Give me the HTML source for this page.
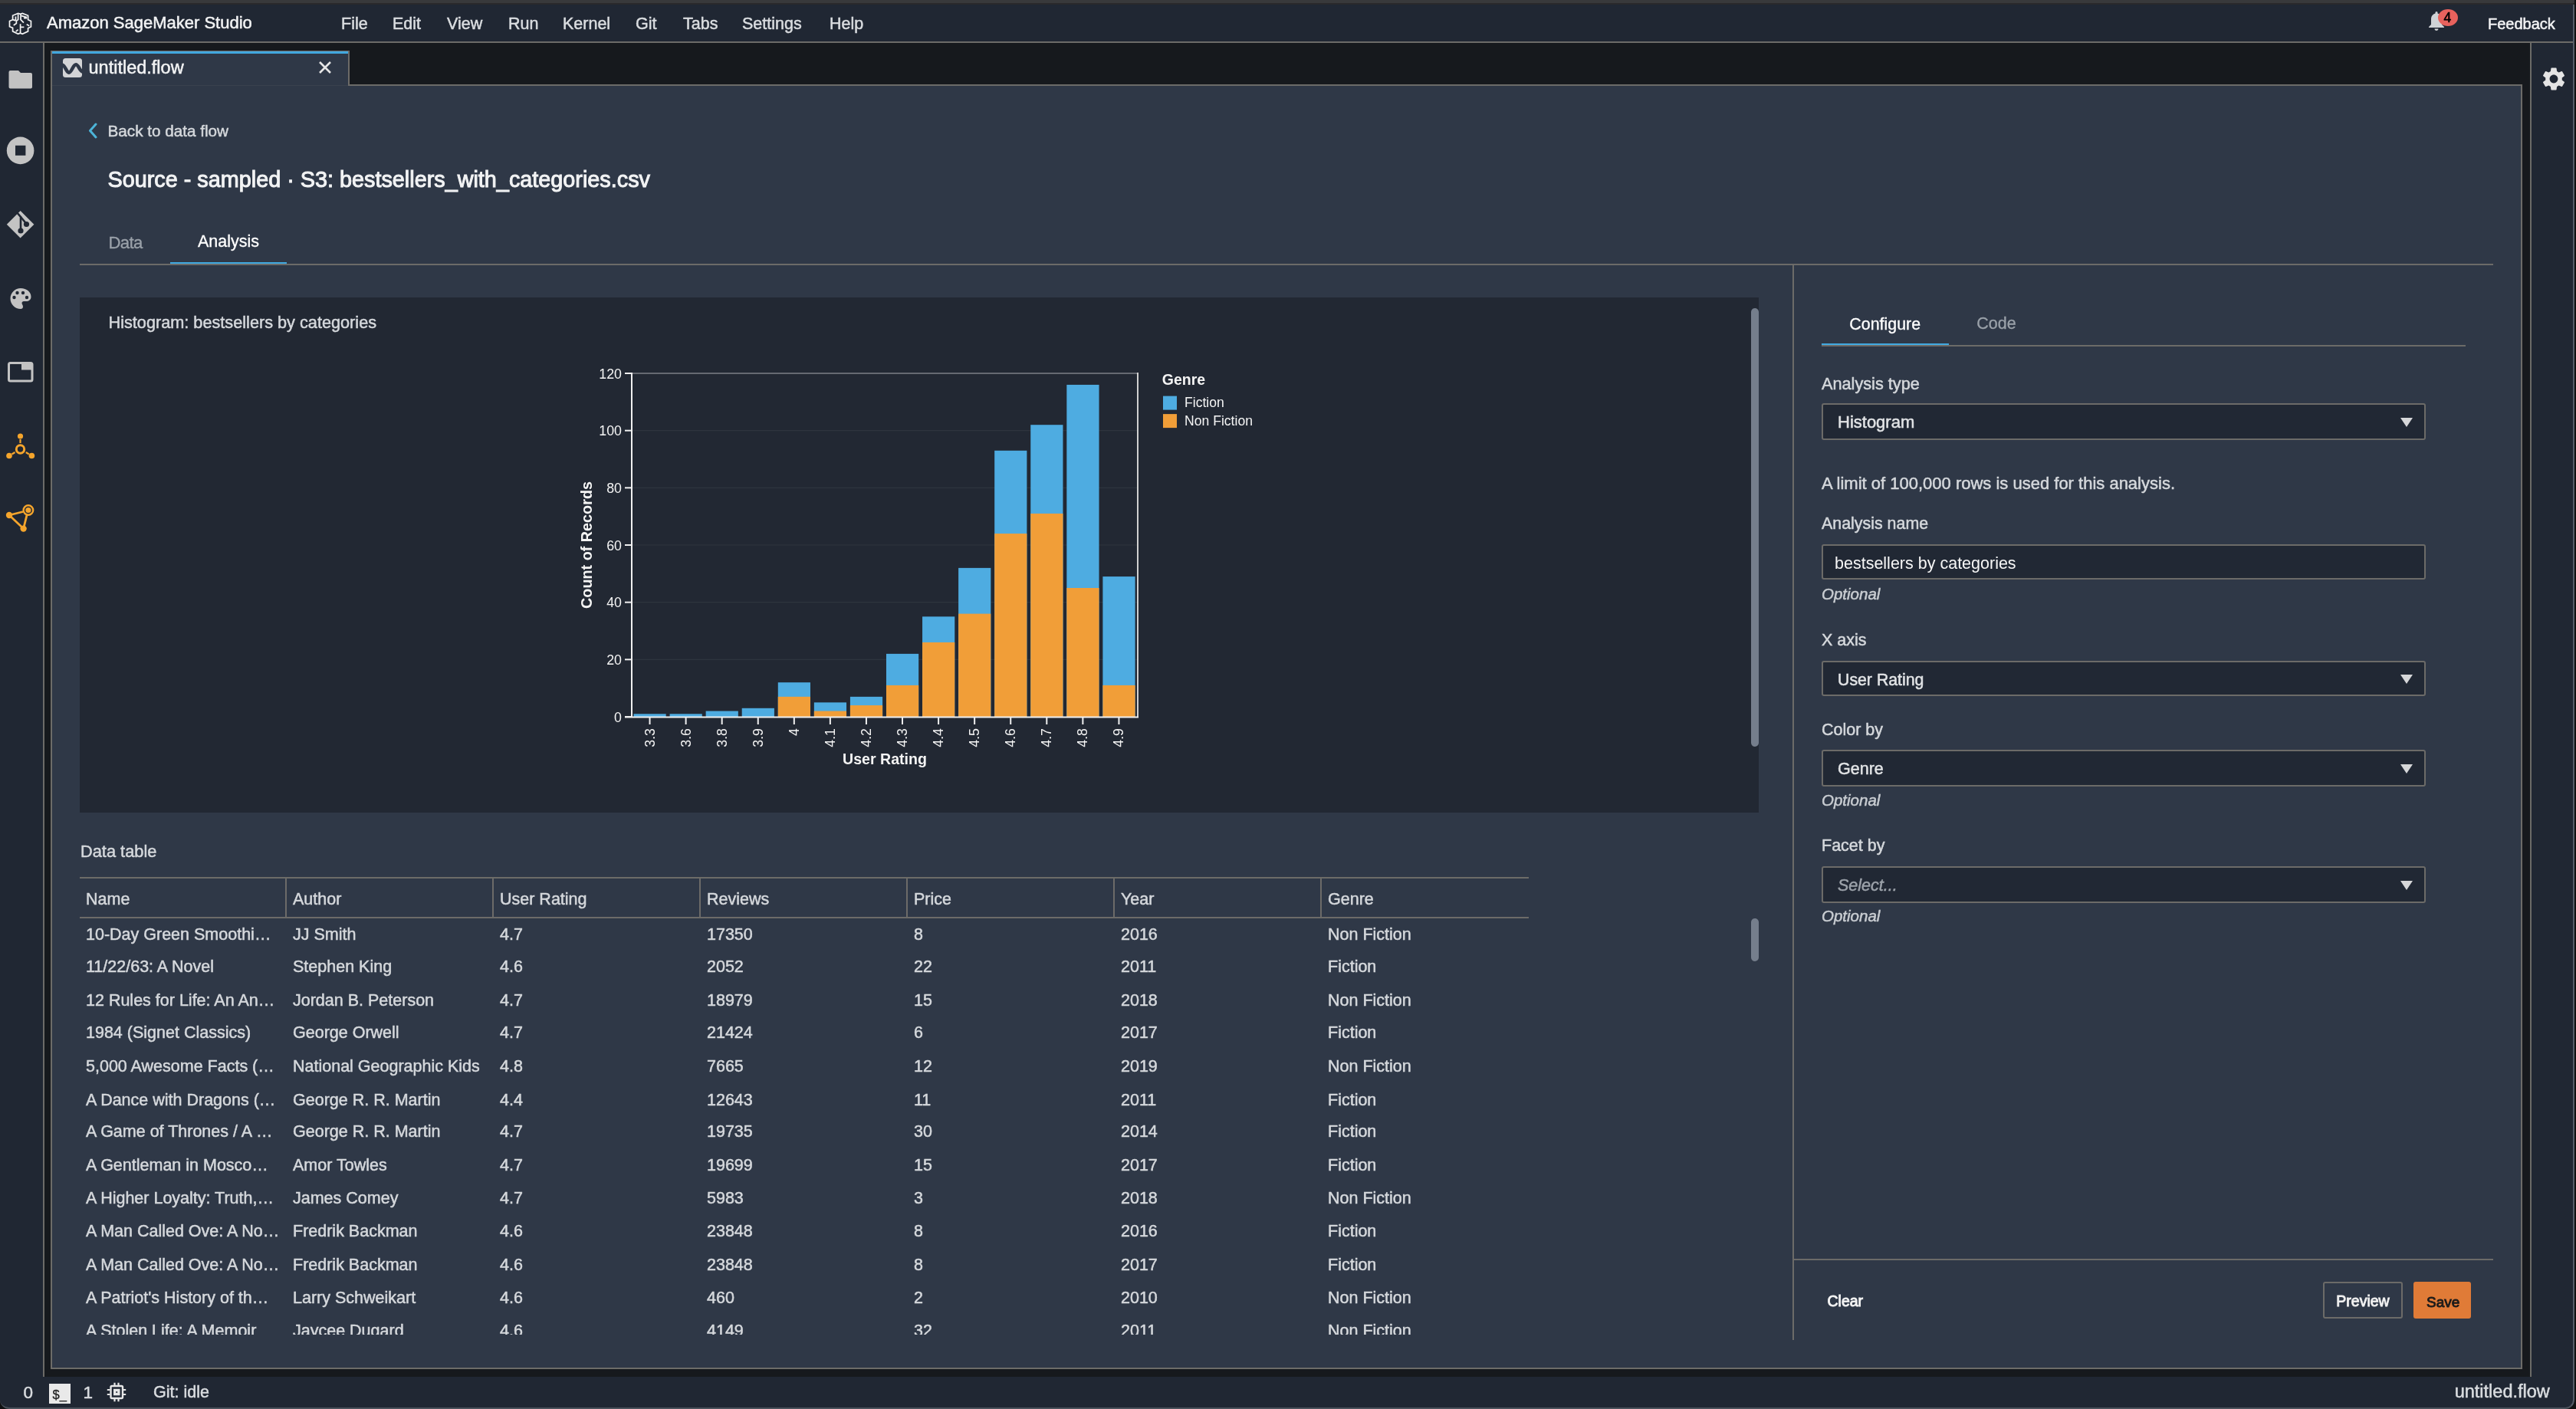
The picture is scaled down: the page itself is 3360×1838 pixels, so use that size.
<!DOCTYPE html><html><head><meta charset="utf-8"><style>html,body{margin:0;padding:0;width:3360px;height:1838px;overflow:hidden;font-family:"Liberation Sans", sans-serif;}</style></head><body><div style="position:absolute;left:0;top:0;width:3360px;height:1838px;overflow:hidden;will-change:transform;background:#0f1011"><div style="position:absolute;left:0px;top:0px;width:3360px;height:1838px;background:#0f1011;"></div>
<div style="position:absolute;left:0px;top:0px;width:3358px;height:4px;background:#38393b;"></div>
<div style="position:absolute;left:0px;top:4px;width:3358px;height:2px;background:#29292b;"></div>
<div style="position:absolute;left:0px;top:6px;width:3358px;height:48px;background:#202733;"></div>
<div style="position:absolute;left:0px;top:54px;width:3358px;height:2px;background:#6c6b68;"></div>
<div style="position:absolute;left:0px;top:56px;width:56px;height:1740px;background:#202733;"></div>
<div style="position:absolute;left:56px;top:56px;width:2px;height:1740px;background:#6c6b68;"></div>
<div style="position:absolute;left:58px;top:56px;width:3242px;height:1740px;background:#16191d;"></div>
<div style="position:absolute;left:3300px;top:56px;width:2px;height:1740px;background:#6c6b68;"></div>
<div style="position:absolute;left:3302px;top:56px;width:56px;height:1740px;background:#202733;"></div>
<div style="position:absolute;left:0px;top:1796px;width:3358px;height:42px;background:#202733;box-sizing:border-box;border-bottom:2px solid #4b525b;border-right:2px solid #555d68;border-radius:0 0 12px 12px;"></div>
<div style="position:absolute;left:3356px;top:6px;width:2px;height:1800px;background:#555d68;"></div>
<div style="position:absolute;left:66px;top:110px;width:3224px;height:1676px;background:#2f3847;box-sizing:border-box;border:2px solid #6c6b68;"></div>
<div style="position:absolute;left:66px;top:66px;width:390px;height:46px;background:#2f3847;box-sizing:border-box;border:2px solid #6c6b68;border-bottom:none;"></div>
<div style="position:absolute;left:68px;top:67px;width:386px;height:3px;background:#41a7de;"></div>
<div style="position:absolute;left:68px;top:110px;width:386px;height:2px;background:#2f3847;"></div>
<div style="position:absolute;left:68px;top:111px;width:386px;height:1px;background:#39414e;"></div>
<svg style="position:absolute;left:10px;top:15px" width="34" height="32" viewBox="0 0 1497 1409">
<g fill="none" stroke="#f4f4f4" stroke-width="76" stroke-linejoin="miter" stroke-linecap="butt">
<path d="M720,150 L850,110 L1170,230 L1170,470 L1340,550 L1340,880 L1170,960 L1170,1140 L850,1290 L720,1240 L600,1290 L290,1140 L290,940 L110,870 L110,550 L290,470 L290,230 L600,110 Z"/>
<path d="M750,150 L750,470 L920,640"/>
<path d="M790,250 L1070,330 L1070,380 L930,380"/>
<path d="M600,150 L600,470 L500,540 L500,680 L340,790"/>
<path d="M290,470 L460,520 M460,290 L460,520"/>
<path d="M730,720 L730,1240 M730,900 L940,900"/>
<path d="M1090,740 L1240,825"/>
<path d="M470,1150 L600,1040"/>
</g></svg>
<div style="position:absolute;left:61px;top:14.87px;height:29px;line-height:29px;font-size:22px;color:#f2f3f4;font-weight:400;font-style:normal;white-space:pre;-webkit-text-stroke:0.5px #f2f3f4;">Amazon SageMaker Studio</div>
<div style="position:absolute;left:445px;top:16.55px;height:28px;line-height:28px;font-size:21.5px;color:#dadde0;font-weight:400;font-style:normal;white-space:pre;-webkit-text-stroke:0.5px #dadde0;">File</div>
<div style="position:absolute;left:512px;top:16.55px;height:28px;line-height:28px;font-size:21.5px;color:#dadde0;font-weight:400;font-style:normal;white-space:pre;-webkit-text-stroke:0.5px #dadde0;">Edit</div>
<div style="position:absolute;left:583px;top:16.55px;height:28px;line-height:28px;font-size:21.5px;color:#dadde0;font-weight:400;font-style:normal;white-space:pre;-webkit-text-stroke:0.5px #dadde0;">View</div>
<div style="position:absolute;left:663px;top:16.55px;height:28px;line-height:28px;font-size:21.5px;color:#dadde0;font-weight:400;font-style:normal;white-space:pre;-webkit-text-stroke:0.5px #dadde0;">Run</div>
<div style="position:absolute;left:734px;top:16.55px;height:28px;line-height:28px;font-size:21.5px;color:#dadde0;font-weight:400;font-style:normal;white-space:pre;-webkit-text-stroke:0.5px #dadde0;">Kernel</div>
<div style="position:absolute;left:829px;top:16.55px;height:28px;line-height:28px;font-size:21.5px;color:#dadde0;font-weight:400;font-style:normal;white-space:pre;-webkit-text-stroke:0.5px #dadde0;">Git</div>
<div style="position:absolute;left:891px;top:16.55px;height:28px;line-height:28px;font-size:21.5px;color:#dadde0;font-weight:400;font-style:normal;white-space:pre;-webkit-text-stroke:0.5px #dadde0;">Tabs</div>
<div style="position:absolute;left:968px;top:16.55px;height:28px;line-height:28px;font-size:21.5px;color:#dadde0;font-weight:400;font-style:normal;white-space:pre;-webkit-text-stroke:0.5px #dadde0;">Settings</div>
<div style="position:absolute;left:1082px;top:16.55px;height:28px;line-height:28px;font-size:21.5px;color:#dadde0;font-weight:400;font-style:normal;white-space:pre;-webkit-text-stroke:0.5px #dadde0;">Help</div>
<div style="position:absolute;left:3245px;top:18.07px;height:26px;line-height:26px;font-size:20px;color:#f2f3f4;font-weight:400;font-style:normal;white-space:pre;-webkit-text-stroke:0.5px #f2f3f4;">Feedback</div>
<svg style="position:absolute;left:3166px;top:13px" width="24" height="28" viewBox="0 0 24 28">
<path d="M12,2 C13,2 13.5,2.8 13.5,3.5 L13.5,4.5 C17,5.5 19,8.5 19,12 L19,19 L22,22 L22,23 L2,23 L2,22 L5,19 L5,12 C5,8.5 7,5.5 10.5,4.5 L10.5,3.5 C10.5,2.8 11,2 12,2 Z M9.5,24.5 L14.5,24.5 C14.5,26 13.4,27 12,27 C10.6,27 9.5,26 9.5,24.5 Z" fill="#cfd2d6"/>
</svg>
<div style="position:absolute;left:3180px;top:12px;width:26px;height:22px;border-radius:50%;background:#e8625d;"></div>
<div style="position:absolute;left:3187.5px;top:12.23px;height:23px;line-height:23px;font-size:17.5px;color:#000;font-weight:400;font-style:normal;white-space:pre;-webkit-text-stroke:0.6px #000;">4</div>
<svg style="position:absolute;left:3312.5px;top:84.5px" width="36" height="36" viewBox="0 0 24 24">
<path fill="#e4e4e4" d="M19.14,12.94c0.04-0.3,0.06-0.61,0.06-0.94c0-0.32-0.02-0.64-0.07-0.94l2.03-1.58c0.18-0.14,0.23-0.41,0.12-0.61 l-1.92-3.32c-0.12-0.22-0.37-0.29-0.59-0.22l-2.39,0.96c-0.5-0.38-1.03-0.7-1.62-0.94L14.4,2.81c-0.04-0.24-0.24-0.41-0.48-0.41 h-3.84c-0.24,0-0.43,0.17-0.47,0.41L9.25,5.35C8.66,5.59,8.12,5.92,7.63,6.29L5.24,5.33c-0.22-0.08-0.47,0-0.59,0.22L2.74,8.87 C2.62,9.08,2.66,9.34,2.86,9.48l2.03,1.58C4.84,11.36,4.8,11.69,4.8,12s0.02,0.64,0.07,0.94l-2.03,1.58 c-0.18,0.14-0.23,0.41-0.12,0.61l1.92,3.32c0.12,0.22,0.37,0.29,0.59,0.22l2.39-0.96c0.5,0.38,1.03,0.7,1.62,0.94l0.36,2.54 c0.05,0.24,0.24,0.41,0.48,0.41h3.84c0.24,0,0.44-0.17,0.47-0.41l0.36-2.54c0.59-0.24,1.13-0.56,1.62-0.94l2.39,0.96 c0.22,0.08,0.47,0,0.59-0.22l1.92-3.32c0.12-0.22,0.07-0.47-0.12-0.61L19.14,12.94z M12,15.6c-1.98,0-3.6-1.62-3.6-3.6 s1.62-3.6,3.6-3.6s3.6,1.62,3.6,3.6S13.98,15.6,12,15.6z"/>
</svg>
<svg style="position:absolute;left:0;top:56px" width="56" height="700" viewBox="0 56 56 700">
<path fill="#c3c3c3" d="M13.5,92 L24,92 L27,95 L40,95 Q42,95 42,97 L42,113.5 Q42,115.5 40,115.5 L13.5,115.5 Q11.5,115.5 11.5,113.5 L11.5,94 Q11.5,92 13.5,92 Z"/>
<circle cx="26.6" cy="196.4" r="17.8" fill="#c3c3c3"/>
<rect x="20" y="189.8" width="13.4" height="13" fill="#202733"/>
<path fill="#c3c3c3" d="M26.6,275 L44.4,292.8 L26.6,310.6 L8.8,292.8 Z"/>
<g stroke="#202733" stroke-width="2.6" fill="none"><path d="M21.5,276.5 L27,283 L27,301"/><path d="M27,283 L34.5,292"/></g>
<circle cx="27" cy="301" r="3.6" fill="#202733"/><circle cx="34.5" cy="292.5" r="3.6" fill="#202733"/>
<path fill="#c3c3c3" d="M27,376 C35,376 40.5,381 40.5,387 C40.5,391 37.5,393 34,393 L31,393 C29.5,393 28.5,394 28.5,395.5 C28.5,397 30,398 30,400 C30,401.8 28.8,403 27,403 C19.5,403 13.5,397 13.5,389.5 C13.5,382 19.5,376 27,376 Z"/>
<g fill="#202733"><circle cx="18.5" cy="388" r="2.2"/><circle cx="22.5" cy="382" r="2.2"/><circle cx="30" cy="382" r="2.2"/><circle cx="35" cy="388" r="2.2"/></g>
<rect x="11.5" y="473.5" width="30.5" height="23.5" rx="2" fill="none" stroke="#c3c3c3" stroke-width="3"/>
<rect x="28" y="473.5" width="14" height="9" fill="#c3c3c3"/>
<g fill="#f5a52c"><circle cx="26.5" cy="569" r="3.6"/><circle cx="12" cy="594.5" r="3.8"/><circle cx="41.4" cy="594.5" r="3.8"/></g>
<circle cx="26.5" cy="586" r="5.2" fill="none" stroke="#f5a52c" stroke-width="3"/>
<g stroke="#f5a52c" stroke-width="2.2"><path d="M26.5,573 L26.5,578"/><path d="M15.5,592.5 L19.5,590"/><path d="M37.8,592.5 L33.8,590"/></g>
<circle cx="36.9" cy="665.5" r="6.3" fill="none" stroke="#f5a52c" stroke-width="2.4"/>
<circle cx="36.9" cy="665.5" r="3.6" fill="#f5a52c"/>
<circle cx="12" cy="672" r="4.2" fill="#f5a52c"/><circle cx="30.6" cy="689.6" r="4.2" fill="#f5a52c"/>
<g stroke="#f5a52c" stroke-width="2.8"><path d="M12,672 L30,667.5"/><path d="M12,672 L30.6,689.6"/><path d="M30.6,689.6 L35,672"/></g>
</svg>
<svg style="position:absolute;left:82px;top:76px" width="25" height="25" viewBox="0 0 25 25">
<rect x="0" y="0" width="25" height="25" rx="3.5" fill="#d3d4d6"/>
<path d="M-1,8.5 C3,9 4.5,18.6 7.9,18.6 C11.3,18.6 13.5,8.3 17,8.3 C20.5,8.3 22,17.5 26,17.5" fill="none" stroke="#2f3847" stroke-width="4.6"/>
</svg>
<div style="position:absolute;left:115.5px;top:73.35px;height:31px;line-height:31px;font-size:23.5px;color:#f2f3f4;font-weight:400;font-style:normal;white-space:pre;-webkit-text-stroke:0.5px #f2f3f4;">untitled.flow</div>
<svg style="position:absolute;left:416px;top:80px" width="16" height="16" viewBox="0 0 16 16">
<path d="M1,1 L15,15 M15,1 L1,15" stroke="#e6e6e6" stroke-width="2.6"/></svg>
<svg style="position:absolute;left:113px;top:160px" width="16" height="21" viewBox="0 0 16 21">
<path d="M12,2 L4.5,10.5 L12,19" fill="none" stroke="#4cb4d8" stroke-width="3" stroke-linecap="round" stroke-linejoin="round"/></svg>
<div style="position:absolute;left:140.5px;top:156.52px;height:27px;line-height:27px;font-size:20.7px;color:#d5d8dc;font-weight:400;font-style:normal;white-space:pre;-webkit-text-stroke:0.5px #d5d8dc;">Back to data flow</div>
<div style="position:absolute;left:140.5px;top:215.52px;height:37px;line-height:37px;font-size:28.8px;color:#f2f3f4;font-weight:400;font-style:normal;white-space:pre;-webkit-text-stroke:1.0px #f2f3f4;">Source - sampled · S3: bestsellers_with_categories.csv</div>
<div style="position:absolute;left:141.5px;top:301.80px;height:29px;line-height:29px;font-size:22.2px;color:#9aa1a9;font-weight:400;font-style:normal;white-space:pre;-webkit-text-stroke:0.3px #9aa1a9;letter-spacing:-0.7px;">Data</div>
<div style="position:absolute;left:258px;top:300.85px;height:28px;line-height:28px;font-size:21.5px;color:#ffffff;font-weight:400;font-style:normal;white-space:pre;-webkit-text-stroke:0.3px #ffffff;">Analysis</div>
<div style="position:absolute;left:104px;top:344px;width:3148px;height:2px;background:#6c6b68;"></div>
<div style="position:absolute;left:222px;top:342px;width:152px;height:2px;background:#41a9e1;"></div>
<div style="position:absolute;left:104px;top:388px;width:2190px;height:672px;background:#222833;"></div>
<div style="position:absolute;left:2284px;top:402px;width:10px;height:572px;background:#757e8c;border-radius:5px;"></div>
<div style="position:absolute;left:141.5px;top:406.98px;height:28px;line-height:28px;font-size:21.7px;color:#d5d8dc;font-weight:400;font-style:normal;white-space:pre;-webkit-text-stroke:0.5px #d5d8dc;">Histogram: bestsellers by categories</div>
<svg style="position:absolute;left:0;top:0" width="3360" height="1838" viewBox="0 0 3360 1838" font-family="Liberation Sans, sans-serif" style="-webkit-text-stroke:0.4px #f4f4f4"><line x1="824" y1="860.33" x2="1483" y2="860.33" stroke="#2e343e" stroke-width="1.2"/><line x1="824" y1="785.67" x2="1483" y2="785.67" stroke="#2e343e" stroke-width="1.2"/><line x1="824" y1="711.00" x2="1483" y2="711.00" stroke="#2e343e" stroke-width="1.2"/><line x1="824" y1="636.33" x2="1483" y2="636.33" stroke="#2e343e" stroke-width="1.2"/><line x1="824" y1="561.67" x2="1483" y2="561.67" stroke="#2e343e" stroke-width="1.2"/><line x1="824" y1="487" x2="1483" y2="487" stroke="#7c8088" stroke-width="1.5"/><line x1="1484" y1="486" x2="1484" y2="936" stroke="#d0d0d0" stroke-width="2"/><rect x="826.50" y="931.27" width="42.2" height="3.73" fill="#4eace1"/><rect x="873.57" y="931.27" width="42.2" height="3.73" fill="#4eace1"/><rect x="920.64" y="927.53" width="42.2" height="7.47" fill="#4eace1"/><rect x="967.71" y="923.80" width="42.2" height="11.20" fill="#4eace1"/><rect x="1014.78" y="890.20" width="42.2" height="44.80" fill="#4eace1"/><rect x="1014.78" y="908.87" width="42.2" height="26.13" fill="#f19e38"/><rect x="1061.85" y="916.33" width="42.2" height="18.67" fill="#4eace1"/><rect x="1061.85" y="927.53" width="42.2" height="7.47" fill="#f19e38"/><rect x="1108.92" y="908.87" width="42.2" height="26.13" fill="#4eace1"/><rect x="1108.92" y="920.07" width="42.2" height="14.93" fill="#f19e38"/><rect x="1155.99" y="852.87" width="42.2" height="82.13" fill="#4eace1"/><rect x="1155.99" y="893.93" width="42.2" height="41.07" fill="#f19e38"/><rect x="1203.06" y="804.33" width="42.2" height="130.67" fill="#4eace1"/><rect x="1203.06" y="837.93" width="42.2" height="97.07" fill="#f19e38"/><rect x="1250.13" y="740.87" width="42.2" height="194.13" fill="#4eace1"/><rect x="1250.13" y="800.60" width="42.2" height="134.40" fill="#f19e38"/><rect x="1297.20" y="587.80" width="42.2" height="347.20" fill="#4eace1"/><rect x="1297.20" y="696.07" width="42.2" height="238.93" fill="#f19e38"/><rect x="1344.27" y="554.20" width="42.2" height="380.80" fill="#4eace1"/><rect x="1344.27" y="669.93" width="42.2" height="265.07" fill="#f19e38"/><rect x="1391.34" y="501.93" width="42.2" height="433.07" fill="#4eace1"/><rect x="1391.34" y="767.00" width="42.2" height="168.00" fill="#f19e38"/><rect x="1438.41" y="752.07" width="42.2" height="182.93" fill="#4eace1"/><rect x="1438.41" y="893.93" width="42.2" height="41.07" fill="#f19e38"/><line x1="824" y1="486" x2="824" y2="936" stroke="#f0f0f0" stroke-width="2"/><line x1="815" y1="935.5" x2="1485" y2="935.5" stroke="#f0f0f0" stroke-width="2"/><line x1="815" y1="935.00" x2="824" y2="935.00" stroke="#f0f0f0" stroke-width="2"/><text x="811" y="941.50" text-anchor="end" font-size="17.8" fill="#f4f4f4">0</text><line x1="815" y1="860.33" x2="824" y2="860.33" stroke="#f0f0f0" stroke-width="2"/><text x="811" y="866.83" text-anchor="end" font-size="17.8" fill="#f4f4f4">20</text><line x1="815" y1="785.67" x2="824" y2="785.67" stroke="#f0f0f0" stroke-width="2"/><text x="811" y="792.17" text-anchor="end" font-size="17.8" fill="#f4f4f4">40</text><line x1="815" y1="711.00" x2="824" y2="711.00" stroke="#f0f0f0" stroke-width="2"/><text x="811" y="717.50" text-anchor="end" font-size="17.8" fill="#f4f4f4">60</text><line x1="815" y1="636.33" x2="824" y2="636.33" stroke="#f0f0f0" stroke-width="2"/><text x="811" y="642.83" text-anchor="end" font-size="17.8" fill="#f4f4f4">80</text><line x1="815" y1="561.67" x2="824" y2="561.67" stroke="#f0f0f0" stroke-width="2"/><text x="811" y="568.17" text-anchor="end" font-size="17.8" fill="#f4f4f4">100</text><line x1="815" y1="487.00" x2="824" y2="487.00" stroke="#f0f0f0" stroke-width="2"/><text x="811" y="493.50" text-anchor="end" font-size="17.8" fill="#f4f4f4">120</text><line x1="847.53" y1="936" x2="847.53" y2="945" stroke="#f0f0f0" stroke-width="2"/><text transform="translate(853.53,950) rotate(-90)" text-anchor="end" font-size="17.8" fill="#f4f4f4">3.3</text><line x1="894.61" y1="936" x2="894.61" y2="945" stroke="#f0f0f0" stroke-width="2"/><text transform="translate(900.61,950) rotate(-90)" text-anchor="end" font-size="17.8" fill="#f4f4f4">3.6</text><line x1="941.67" y1="936" x2="941.67" y2="945" stroke="#f0f0f0" stroke-width="2"/><text transform="translate(947.67,950) rotate(-90)" text-anchor="end" font-size="17.8" fill="#f4f4f4">3.8</text><line x1="988.75" y1="936" x2="988.75" y2="945" stroke="#f0f0f0" stroke-width="2"/><text transform="translate(994.75,950) rotate(-90)" text-anchor="end" font-size="17.8" fill="#f4f4f4">3.9</text><line x1="1035.82" y1="936" x2="1035.82" y2="945" stroke="#f0f0f0" stroke-width="2"/><text transform="translate(1041.82,950) rotate(-90)" text-anchor="end" font-size="17.8" fill="#f4f4f4">4</text><line x1="1082.88" y1="936" x2="1082.88" y2="945" stroke="#f0f0f0" stroke-width="2"/><text transform="translate(1088.88,950) rotate(-90)" text-anchor="end" font-size="17.8" fill="#f4f4f4">4.1</text><line x1="1129.95" y1="936" x2="1129.95" y2="945" stroke="#f0f0f0" stroke-width="2"/><text transform="translate(1135.95,950) rotate(-90)" text-anchor="end" font-size="17.8" fill="#f4f4f4">4.2</text><line x1="1177.03" y1="936" x2="1177.03" y2="945" stroke="#f0f0f0" stroke-width="2"/><text transform="translate(1183.03,950) rotate(-90)" text-anchor="end" font-size="17.8" fill="#f4f4f4">4.3</text><line x1="1224.10" y1="936" x2="1224.10" y2="945" stroke="#f0f0f0" stroke-width="2"/><text transform="translate(1230.10,950) rotate(-90)" text-anchor="end" font-size="17.8" fill="#f4f4f4">4.4</text><line x1="1271.16" y1="936" x2="1271.16" y2="945" stroke="#f0f0f0" stroke-width="2"/><text transform="translate(1277.16,950) rotate(-90)" text-anchor="end" font-size="17.8" fill="#f4f4f4">4.5</text><line x1="1318.24" y1="936" x2="1318.24" y2="945" stroke="#f0f0f0" stroke-width="2"/><text transform="translate(1324.24,950) rotate(-90)" text-anchor="end" font-size="17.8" fill="#f4f4f4">4.6</text><line x1="1365.30" y1="936" x2="1365.30" y2="945" stroke="#f0f0f0" stroke-width="2"/><text transform="translate(1371.30,950) rotate(-90)" text-anchor="end" font-size="17.8" fill="#f4f4f4">4.7</text><line x1="1412.38" y1="936" x2="1412.38" y2="945" stroke="#f0f0f0" stroke-width="2"/><text transform="translate(1418.38,950) rotate(-90)" text-anchor="end" font-size="17.8" fill="#f4f4f4">4.8</text><line x1="1459.45" y1="936" x2="1459.45" y2="945" stroke="#f0f0f0" stroke-width="2"/><text transform="translate(1465.45,950) rotate(-90)" text-anchor="end" font-size="17.8" fill="#f4f4f4">4.9</text><text transform="translate(772,711) rotate(-90)" text-anchor="middle" font-size="19.8" font-weight="bold" fill="#f4f4f4">Count of Records</text><text x="1154" y="996.7" text-anchor="middle" font-size="19.6" font-weight="bold" fill="#f4f4f4">User Rating</text><text x="1515.8" y="501.8" font-size="19.5" font-weight="bold" fill="#f4f4f4">Genre</text><rect x="1517" y="516.6" width="18" height="18" fill="#4eace1"/><rect x="1517" y="540.1" width="18" height="18" fill="#f19e38"/><text x="1545" y="531" font-size="17.6" fill="#f4f4f4">Fiction</text><text x="1545" y="554.5" font-size="17.6" fill="#f4f4f4">Non Fiction</text></svg>
<div style="position:absolute;left:105px;top:1096.84px;height:28px;line-height:28px;font-size:21.8px;color:#d5d8dc;font-weight:400;font-style:normal;white-space:pre;-webkit-text-stroke:0.5px #d5d8dc;">Data table</div>
<div style="position:absolute;left:104px;top:1144px;width:1890px;height:2px;background:#6c6b68;"></div>
<div style="position:absolute;left:104px;top:1196px;width:1890px;height:2px;background:#6c6b68;"></div>
<div style="position:absolute;left:372px;top:1146px;width:2px;height:50px;background:#6c6b68;"></div>
<div style="position:absolute;left:642px;top:1146px;width:2px;height:50px;background:#6c6b68;"></div>
<div style="position:absolute;left:912px;top:1146px;width:2px;height:50px;background:#6c6b68;"></div>
<div style="position:absolute;left:1182px;top:1146px;width:2px;height:50px;background:#6c6b68;"></div>
<div style="position:absolute;left:1452px;top:1146px;width:2px;height:50px;background:#6c6b68;"></div>
<div style="position:absolute;left:1722px;top:1146px;width:2px;height:50px;background:#6c6b68;"></div>
<div style="position:absolute;left:112px;top:1159.15px;height:28px;line-height:28px;font-size:21.5px;color:#d5d8dc;font-weight:400;font-style:normal;white-space:pre;-webkit-text-stroke:0.5px #d5d8dc;">Name</div>
<div style="position:absolute;left:382px;top:1159.15px;height:28px;line-height:28px;font-size:21.5px;color:#d5d8dc;font-weight:400;font-style:normal;white-space:pre;-webkit-text-stroke:0.5px #d5d8dc;">Author</div>
<div style="position:absolute;left:652px;top:1159.15px;height:28px;line-height:28px;font-size:21.5px;color:#d5d8dc;font-weight:400;font-style:normal;white-space:pre;-webkit-text-stroke:0.5px #d5d8dc;">User Rating</div>
<div style="position:absolute;left:922px;top:1159.15px;height:28px;line-height:28px;font-size:21.5px;color:#d5d8dc;font-weight:400;font-style:normal;white-space:pre;-webkit-text-stroke:0.5px #d5d8dc;">Reviews</div>
<div style="position:absolute;left:1192px;top:1159.15px;height:28px;line-height:28px;font-size:21.5px;color:#d5d8dc;font-weight:400;font-style:normal;white-space:pre;-webkit-text-stroke:0.5px #d5d8dc;">Price</div>
<div style="position:absolute;left:1462px;top:1159.15px;height:28px;line-height:28px;font-size:21.5px;color:#d5d8dc;font-weight:400;font-style:normal;white-space:pre;-webkit-text-stroke:0.5px #d5d8dc;">Year</div>
<div style="position:absolute;left:1732px;top:1159.15px;height:28px;line-height:28px;font-size:21.5px;color:#d5d8dc;font-weight:400;font-style:normal;white-space:pre;-webkit-text-stroke:0.5px #d5d8dc;">Genre</div>
<div style="position:absolute;left:104px;top:1198px;width:1890px;height:543px;overflow:hidden;"><div style="position:absolute;left:8px;top:7.25px;height:28px;line-height:28px;font-size:21.5px;color:#d5d8dc;white-space:pre;-webkit-text-stroke:0.5px #d5d8dc;">10-Day Green Smoothi…</div><div style="position:absolute;left:278px;top:7.25px;height:28px;line-height:28px;font-size:21.5px;color:#d5d8dc;white-space:pre;-webkit-text-stroke:0.5px #d5d8dc;">JJ Smith</div><div style="position:absolute;left:548px;top:7.25px;height:28px;line-height:28px;font-size:21.5px;color:#d5d8dc;white-space:pre;-webkit-text-stroke:0.5px #d5d8dc;">4.7</div><div style="position:absolute;left:818px;top:7.25px;height:28px;line-height:28px;font-size:21.5px;color:#d5d8dc;white-space:pre;-webkit-text-stroke:0.5px #d5d8dc;">17350</div><div style="position:absolute;left:1088px;top:7.25px;height:28px;line-height:28px;font-size:21.5px;color:#d5d8dc;white-space:pre;-webkit-text-stroke:0.5px #d5d8dc;">8</div><div style="position:absolute;left:1358px;top:7.25px;height:28px;line-height:28px;font-size:21.5px;color:#d5d8dc;white-space:pre;-webkit-text-stroke:0.5px #d5d8dc;">2016</div><div style="position:absolute;left:1628px;top:7.25px;height:28px;line-height:28px;font-size:21.5px;color:#d5d8dc;white-space:pre;-webkit-text-stroke:0.5px #d5d8dc;">Non Fiction</div><div style="position:absolute;left:8px;top:49.25px;height:28px;line-height:28px;font-size:21.5px;color:#d5d8dc;white-space:pre;-webkit-text-stroke:0.5px #d5d8dc;">11/22/63: A Novel</div><div style="position:absolute;left:278px;top:49.25px;height:28px;line-height:28px;font-size:21.5px;color:#d5d8dc;white-space:pre;-webkit-text-stroke:0.5px #d5d8dc;">Stephen King</div><div style="position:absolute;left:548px;top:49.25px;height:28px;line-height:28px;font-size:21.5px;color:#d5d8dc;white-space:pre;-webkit-text-stroke:0.5px #d5d8dc;">4.6</div><div style="position:absolute;left:818px;top:49.25px;height:28px;line-height:28px;font-size:21.5px;color:#d5d8dc;white-space:pre;-webkit-text-stroke:0.5px #d5d8dc;">2052</div><div style="position:absolute;left:1088px;top:49.25px;height:28px;line-height:28px;font-size:21.5px;color:#d5d8dc;white-space:pre;-webkit-text-stroke:0.5px #d5d8dc;">22</div><div style="position:absolute;left:1358px;top:49.25px;height:28px;line-height:28px;font-size:21.5px;color:#d5d8dc;white-space:pre;-webkit-text-stroke:0.5px #d5d8dc;">2011</div><div style="position:absolute;left:1628px;top:49.25px;height:28px;line-height:28px;font-size:21.5px;color:#d5d8dc;white-space:pre;-webkit-text-stroke:0.5px #d5d8dc;">Fiction</div><div style="position:absolute;left:8px;top:92.85px;height:28px;line-height:28px;font-size:21.5px;color:#d5d8dc;white-space:pre;-webkit-text-stroke:0.5px #d5d8dc;">12 Rules for Life: An An…</div><div style="position:absolute;left:278px;top:92.85px;height:28px;line-height:28px;font-size:21.5px;color:#d5d8dc;white-space:pre;-webkit-text-stroke:0.5px #d5d8dc;">Jordan B. Peterson</div><div style="position:absolute;left:548px;top:92.85px;height:28px;line-height:28px;font-size:21.5px;color:#d5d8dc;white-space:pre;-webkit-text-stroke:0.5px #d5d8dc;">4.7</div><div style="position:absolute;left:818px;top:92.85px;height:28px;line-height:28px;font-size:21.5px;color:#d5d8dc;white-space:pre;-webkit-text-stroke:0.5px #d5d8dc;">18979</div><div style="position:absolute;left:1088px;top:92.85px;height:28px;line-height:28px;font-size:21.5px;color:#d5d8dc;white-space:pre;-webkit-text-stroke:0.5px #d5d8dc;">15</div><div style="position:absolute;left:1358px;top:92.85px;height:28px;line-height:28px;font-size:21.5px;color:#d5d8dc;white-space:pre;-webkit-text-stroke:0.5px #d5d8dc;">2018</div><div style="position:absolute;left:1628px;top:92.85px;height:28px;line-height:28px;font-size:21.5px;color:#d5d8dc;white-space:pre;-webkit-text-stroke:0.5px #d5d8dc;">Non Fiction</div><div style="position:absolute;left:8px;top:134.85px;height:28px;line-height:28px;font-size:21.5px;color:#d5d8dc;white-space:pre;-webkit-text-stroke:0.5px #d5d8dc;">1984 (Signet Classics)</div><div style="position:absolute;left:278px;top:134.85px;height:28px;line-height:28px;font-size:21.5px;color:#d5d8dc;white-space:pre;-webkit-text-stroke:0.5px #d5d8dc;">George Orwell</div><div style="position:absolute;left:548px;top:134.85px;height:28px;line-height:28px;font-size:21.5px;color:#d5d8dc;white-space:pre;-webkit-text-stroke:0.5px #d5d8dc;">4.7</div><div style="position:absolute;left:818px;top:134.85px;height:28px;line-height:28px;font-size:21.5px;color:#d5d8dc;white-space:pre;-webkit-text-stroke:0.5px #d5d8dc;">21424</div><div style="position:absolute;left:1088px;top:134.85px;height:28px;line-height:28px;font-size:21.5px;color:#d5d8dc;white-space:pre;-webkit-text-stroke:0.5px #d5d8dc;">6</div><div style="position:absolute;left:1358px;top:134.85px;height:28px;line-height:28px;font-size:21.5px;color:#d5d8dc;white-space:pre;-webkit-text-stroke:0.5px #d5d8dc;">2017</div><div style="position:absolute;left:1628px;top:134.85px;height:28px;line-height:28px;font-size:21.5px;color:#d5d8dc;white-space:pre;-webkit-text-stroke:0.5px #d5d8dc;">Fiction</div><div style="position:absolute;left:8px;top:178.85px;height:28px;line-height:28px;font-size:21.5px;color:#d5d8dc;white-space:pre;-webkit-text-stroke:0.5px #d5d8dc;">5,000 Awesome Facts (…</div><div style="position:absolute;left:278px;top:178.85px;height:28px;line-height:28px;font-size:21.5px;color:#d5d8dc;white-space:pre;-webkit-text-stroke:0.5px #d5d8dc;">National Geographic Kids</div><div style="position:absolute;left:548px;top:178.85px;height:28px;line-height:28px;font-size:21.5px;color:#d5d8dc;white-space:pre;-webkit-text-stroke:0.5px #d5d8dc;">4.8</div><div style="position:absolute;left:818px;top:178.85px;height:28px;line-height:28px;font-size:21.5px;color:#d5d8dc;white-space:pre;-webkit-text-stroke:0.5px #d5d8dc;">7665</div><div style="position:absolute;left:1088px;top:178.85px;height:28px;line-height:28px;font-size:21.5px;color:#d5d8dc;white-space:pre;-webkit-text-stroke:0.5px #d5d8dc;">12</div><div style="position:absolute;left:1358px;top:178.85px;height:28px;line-height:28px;font-size:21.5px;color:#d5d8dc;white-space:pre;-webkit-text-stroke:0.5px #d5d8dc;">2019</div><div style="position:absolute;left:1628px;top:178.85px;height:28px;line-height:28px;font-size:21.5px;color:#d5d8dc;white-space:pre;-webkit-text-stroke:0.5px #d5d8dc;">Non Fiction</div><div style="position:absolute;left:8px;top:222.55px;height:28px;line-height:28px;font-size:21.5px;color:#d5d8dc;white-space:pre;-webkit-text-stroke:0.5px #d5d8dc;">A Dance with Dragons (…</div><div style="position:absolute;left:278px;top:222.55px;height:28px;line-height:28px;font-size:21.5px;color:#d5d8dc;white-space:pre;-webkit-text-stroke:0.5px #d5d8dc;">George R. R. Martin</div><div style="position:absolute;left:548px;top:222.55px;height:28px;line-height:28px;font-size:21.5px;color:#d5d8dc;white-space:pre;-webkit-text-stroke:0.5px #d5d8dc;">4.4</div><div style="position:absolute;left:818px;top:222.55px;height:28px;line-height:28px;font-size:21.5px;color:#d5d8dc;white-space:pre;-webkit-text-stroke:0.5px #d5d8dc;">12643</div><div style="position:absolute;left:1088px;top:222.55px;height:28px;line-height:28px;font-size:21.5px;color:#d5d8dc;white-space:pre;-webkit-text-stroke:0.5px #d5d8dc;">11</div><div style="position:absolute;left:1358px;top:222.55px;height:28px;line-height:28px;font-size:21.5px;color:#d5d8dc;white-space:pre;-webkit-text-stroke:0.5px #d5d8dc;">2011</div><div style="position:absolute;left:1628px;top:222.55px;height:28px;line-height:28px;font-size:21.5px;color:#d5d8dc;white-space:pre;-webkit-text-stroke:0.5px #d5d8dc;">Fiction</div><div style="position:absolute;left:8px;top:264.35px;height:28px;line-height:28px;font-size:21.5px;color:#d5d8dc;white-space:pre;-webkit-text-stroke:0.5px #d5d8dc;">A Game of Thrones / A …</div><div style="position:absolute;left:278px;top:264.35px;height:28px;line-height:28px;font-size:21.5px;color:#d5d8dc;white-space:pre;-webkit-text-stroke:0.5px #d5d8dc;">George R. R. Martin</div><div style="position:absolute;left:548px;top:264.35px;height:28px;line-height:28px;font-size:21.5px;color:#d5d8dc;white-space:pre;-webkit-text-stroke:0.5px #d5d8dc;">4.7</div><div style="position:absolute;left:818px;top:264.35px;height:28px;line-height:28px;font-size:21.5px;color:#d5d8dc;white-space:pre;-webkit-text-stroke:0.5px #d5d8dc;">19735</div><div style="position:absolute;left:1088px;top:264.35px;height:28px;line-height:28px;font-size:21.5px;color:#d5d8dc;white-space:pre;-webkit-text-stroke:0.5px #d5d8dc;">30</div><div style="position:absolute;left:1358px;top:264.35px;height:28px;line-height:28px;font-size:21.5px;color:#d5d8dc;white-space:pre;-webkit-text-stroke:0.5px #d5d8dc;">2014</div><div style="position:absolute;left:1628px;top:264.35px;height:28px;line-height:28px;font-size:21.5px;color:#d5d8dc;white-space:pre;-webkit-text-stroke:0.5px #d5d8dc;">Fiction</div><div style="position:absolute;left:8px;top:308.35px;height:28px;line-height:28px;font-size:21.5px;color:#d5d8dc;white-space:pre;-webkit-text-stroke:0.5px #d5d8dc;">A Gentleman in Mosco…</div><div style="position:absolute;left:278px;top:308.35px;height:28px;line-height:28px;font-size:21.5px;color:#d5d8dc;white-space:pre;-webkit-text-stroke:0.5px #d5d8dc;">Amor Towles</div><div style="position:absolute;left:548px;top:308.35px;height:28px;line-height:28px;font-size:21.5px;color:#d5d8dc;white-space:pre;-webkit-text-stroke:0.5px #d5d8dc;">4.7</div><div style="position:absolute;left:818px;top:308.35px;height:28px;line-height:28px;font-size:21.5px;color:#d5d8dc;white-space:pre;-webkit-text-stroke:0.5px #d5d8dc;">19699</div><div style="position:absolute;left:1088px;top:308.35px;height:28px;line-height:28px;font-size:21.5px;color:#d5d8dc;white-space:pre;-webkit-text-stroke:0.5px #d5d8dc;">15</div><div style="position:absolute;left:1358px;top:308.35px;height:28px;line-height:28px;font-size:21.5px;color:#d5d8dc;white-space:pre;-webkit-text-stroke:0.5px #d5d8dc;">2017</div><div style="position:absolute;left:1628px;top:308.35px;height:28px;line-height:28px;font-size:21.5px;color:#d5d8dc;white-space:pre;-webkit-text-stroke:0.5px #d5d8dc;">Fiction</div><div style="position:absolute;left:8px;top:350.55px;height:28px;line-height:28px;font-size:21.5px;color:#d5d8dc;white-space:pre;-webkit-text-stroke:0.5px #d5d8dc;">A Higher Loyalty: Truth,…</div><div style="position:absolute;left:278px;top:350.55px;height:28px;line-height:28px;font-size:21.5px;color:#d5d8dc;white-space:pre;-webkit-text-stroke:0.5px #d5d8dc;">James Comey</div><div style="position:absolute;left:548px;top:350.55px;height:28px;line-height:28px;font-size:21.5px;color:#d5d8dc;white-space:pre;-webkit-text-stroke:0.5px #d5d8dc;">4.7</div><div style="position:absolute;left:818px;top:350.55px;height:28px;line-height:28px;font-size:21.5px;color:#d5d8dc;white-space:pre;-webkit-text-stroke:0.5px #d5d8dc;">5983</div><div style="position:absolute;left:1088px;top:350.55px;height:28px;line-height:28px;font-size:21.5px;color:#d5d8dc;white-space:pre;-webkit-text-stroke:0.5px #d5d8dc;">3</div><div style="position:absolute;left:1358px;top:350.55px;height:28px;line-height:28px;font-size:21.5px;color:#d5d8dc;white-space:pre;-webkit-text-stroke:0.5px #d5d8dc;">2018</div><div style="position:absolute;left:1628px;top:350.55px;height:28px;line-height:28px;font-size:21.5px;color:#d5d8dc;white-space:pre;-webkit-text-stroke:0.5px #d5d8dc;">Non Fiction</div><div style="position:absolute;left:8px;top:393.85px;height:28px;line-height:28px;font-size:21.5px;color:#d5d8dc;white-space:pre;-webkit-text-stroke:0.5px #d5d8dc;">A Man Called Ove: A No…</div><div style="position:absolute;left:278px;top:393.85px;height:28px;line-height:28px;font-size:21.5px;color:#d5d8dc;white-space:pre;-webkit-text-stroke:0.5px #d5d8dc;">Fredrik Backman</div><div style="position:absolute;left:548px;top:393.85px;height:28px;line-height:28px;font-size:21.5px;color:#d5d8dc;white-space:pre;-webkit-text-stroke:0.5px #d5d8dc;">4.6</div><div style="position:absolute;left:818px;top:393.85px;height:28px;line-height:28px;font-size:21.5px;color:#d5d8dc;white-space:pre;-webkit-text-stroke:0.5px #d5d8dc;">23848</div><div style="position:absolute;left:1088px;top:393.85px;height:28px;line-height:28px;font-size:21.5px;color:#d5d8dc;white-space:pre;-webkit-text-stroke:0.5px #d5d8dc;">8</div><div style="position:absolute;left:1358px;top:393.85px;height:28px;line-height:28px;font-size:21.5px;color:#d5d8dc;white-space:pre;-webkit-text-stroke:0.5px #d5d8dc;">2016</div><div style="position:absolute;left:1628px;top:393.85px;height:28px;line-height:28px;font-size:21.5px;color:#d5d8dc;white-space:pre;-webkit-text-stroke:0.5px #d5d8dc;">Fiction</div><div style="position:absolute;left:8px;top:438.35px;height:28px;line-height:28px;font-size:21.5px;color:#d5d8dc;white-space:pre;-webkit-text-stroke:0.5px #d5d8dc;">A Man Called Ove: A No…</div><div style="position:absolute;left:278px;top:438.35px;height:28px;line-height:28px;font-size:21.5px;color:#d5d8dc;white-space:pre;-webkit-text-stroke:0.5px #d5d8dc;">Fredrik Backman</div><div style="position:absolute;left:548px;top:438.35px;height:28px;line-height:28px;font-size:21.5px;color:#d5d8dc;white-space:pre;-webkit-text-stroke:0.5px #d5d8dc;">4.6</div><div style="position:absolute;left:818px;top:438.35px;height:28px;line-height:28px;font-size:21.5px;color:#d5d8dc;white-space:pre;-webkit-text-stroke:0.5px #d5d8dc;">23848</div><div style="position:absolute;left:1088px;top:438.35px;height:28px;line-height:28px;font-size:21.5px;color:#d5d8dc;white-space:pre;-webkit-text-stroke:0.5px #d5d8dc;">8</div><div style="position:absolute;left:1358px;top:438.35px;height:28px;line-height:28px;font-size:21.5px;color:#d5d8dc;white-space:pre;-webkit-text-stroke:0.5px #d5d8dc;">2017</div><div style="position:absolute;left:1628px;top:438.35px;height:28px;line-height:28px;font-size:21.5px;color:#d5d8dc;white-space:pre;-webkit-text-stroke:0.5px #d5d8dc;">Fiction</div><div style="position:absolute;left:8px;top:480.95px;height:28px;line-height:28px;font-size:21.5px;color:#d5d8dc;white-space:pre;-webkit-text-stroke:0.5px #d5d8dc;">A Patriot's History of th…</div><div style="position:absolute;left:278px;top:480.95px;height:28px;line-height:28px;font-size:21.5px;color:#d5d8dc;white-space:pre;-webkit-text-stroke:0.5px #d5d8dc;">Larry Schweikart</div><div style="position:absolute;left:548px;top:480.95px;height:28px;line-height:28px;font-size:21.5px;color:#d5d8dc;white-space:pre;-webkit-text-stroke:0.5px #d5d8dc;">4.6</div><div style="position:absolute;left:818px;top:480.95px;height:28px;line-height:28px;font-size:21.5px;color:#d5d8dc;white-space:pre;-webkit-text-stroke:0.5px #d5d8dc;">460</div><div style="position:absolute;left:1088px;top:480.95px;height:28px;line-height:28px;font-size:21.5px;color:#d5d8dc;white-space:pre;-webkit-text-stroke:0.5px #d5d8dc;">2</div><div style="position:absolute;left:1358px;top:480.95px;height:28px;line-height:28px;font-size:21.5px;color:#d5d8dc;white-space:pre;-webkit-text-stroke:0.5px #d5d8dc;">2010</div><div style="position:absolute;left:1628px;top:480.95px;height:28px;line-height:28px;font-size:21.5px;color:#d5d8dc;white-space:pre;-webkit-text-stroke:0.5px #d5d8dc;">Non Fiction</div><div style="position:absolute;left:8px;top:523.55px;height:28px;line-height:28px;font-size:21.5px;color:#d5d8dc;white-space:pre;-webkit-text-stroke:0.5px #d5d8dc;">A Stolen Life: A Memoir</div><div style="position:absolute;left:278px;top:523.55px;height:28px;line-height:28px;font-size:21.5px;color:#d5d8dc;white-space:pre;-webkit-text-stroke:0.5px #d5d8dc;">Jaycee Dugard</div><div style="position:absolute;left:548px;top:523.55px;height:28px;line-height:28px;font-size:21.5px;color:#d5d8dc;white-space:pre;-webkit-text-stroke:0.5px #d5d8dc;">4.6</div><div style="position:absolute;left:818px;top:523.55px;height:28px;line-height:28px;font-size:21.5px;color:#d5d8dc;white-space:pre;-webkit-text-stroke:0.5px #d5d8dc;">4149</div><div style="position:absolute;left:1088px;top:523.55px;height:28px;line-height:28px;font-size:21.5px;color:#d5d8dc;white-space:pre;-webkit-text-stroke:0.5px #d5d8dc;">32</div><div style="position:absolute;left:1358px;top:523.55px;height:28px;line-height:28px;font-size:21.5px;color:#d5d8dc;white-space:pre;-webkit-text-stroke:0.5px #d5d8dc;">2011</div><div style="position:absolute;left:1628px;top:523.55px;height:28px;line-height:28px;font-size:21.5px;color:#d5d8dc;white-space:pre;-webkit-text-stroke:0.5px #d5d8dc;">Non Fiction</div></div>
<div style="position:absolute;left:2284px;top:1198px;width:10px;height:56px;background:#757e8c;border-radius:5px;"></div>
<div style="position:absolute;left:2338px;top:346px;width:2px;height:1402px;background:#6c6b68;"></div>
<div style="position:absolute;left:2412.3px;top:409.28px;height:28px;line-height:28px;font-size:21.4px;color:#ffffff;font-weight:400;font-style:normal;white-space:pre;-webkit-text-stroke:0.3px #ffffff;">Configure</div>
<div style="position:absolute;left:2578.3px;top:408.05px;height:28px;line-height:28px;font-size:21.5px;color:#9aa1a9;font-weight:400;font-style:normal;white-space:pre;-webkit-text-stroke:0.3px #9aa1a9;">Code</div>
<div style="position:absolute;left:2376px;top:450px;width:840px;height:2px;background:#6c6b68;"></div>
<div style="position:absolute;left:2376px;top:448px;width:166px;height:2px;background:#41a9e1;"></div>
<div style="position:absolute;left:2376px;top:487.08px;height:28px;line-height:28px;font-size:21.7px;color:#d5d8dc;font-weight:400;font-style:normal;white-space:pre;-webkit-text-stroke:0.5px #d5d8dc;">Analysis type</div>
<div style="position:absolute;left:2376px;top:526px;width:788px;height:48px;background:#212834;box-sizing:border-box;border:2px solid #6c6b68;border-radius:3px;"></div>
<svg style="position:absolute;left:3131px;top:544.5px" width="16" height="12" viewBox="0 0 16 12"><path d="M0,0 L16,0 L8,12 Z" fill="#d6d7d9"/></svg>
<div style="position:absolute;left:2397px;top:536.07px;height:29px;line-height:29px;font-size:22px;color:#e2e4e6;font-weight:400;font-style:normal;white-space:pre;-webkit-text-stroke:0.5px #e2e4e6;">Histogram</div>
<div style="position:absolute;left:2376px;top:616.47px;height:29px;line-height:29px;font-size:22px;color:#d5d8dc;font-weight:400;font-style:normal;white-space:pre;-webkit-text-stroke:0.5px #d5d8dc;">A limit of 100,000 rows is used for this analysis.</div>
<div style="position:absolute;left:2376px;top:668.88px;height:28px;line-height:28px;font-size:21.4px;color:#d5d8dc;font-weight:400;font-style:normal;white-space:pre;-webkit-text-stroke:0.5px #d5d8dc;">Analysis name</div>
<div style="position:absolute;left:2376px;top:710px;width:788px;height:46px;background:#212834;box-sizing:border-box;border:2px solid #6c6b68;border-radius:3px;"></div>
<div style="position:absolute;left:2393px;top:720.85px;height:28px;line-height:28px;font-size:21.5px;color:#f6f6f6;font-weight:400;font-style:normal;white-space:pre;-webkit-text-stroke:0px #f6f6f6;">bestsellers by categories</div>
<div style="position:absolute;left:2376px;top:761.19px;height:27px;line-height:27px;font-size:20.5px;color:#c9cdd2;font-weight:400;font-style:italic;white-space:pre;-webkit-text-stroke:0.5px #c9cdd2;">Optional</div>
<div style="position:absolute;left:2376px;top:821.15px;height:28px;line-height:28px;font-size:21.5px;color:#d5d8dc;font-weight:400;font-style:normal;white-space:pre;-webkit-text-stroke:0.5px #d5d8dc;">X axis</div>
<div style="position:absolute;left:2376px;top:862px;width:788px;height:46px;background:#212834;box-sizing:border-box;border:2px solid #6c6b68;border-radius:3px;"></div>
<svg style="position:absolute;left:3131px;top:879.5px" width="16" height="12" viewBox="0 0 16 12"><path d="M0,0 L16,0 L8,12 Z" fill="#d6d7d9"/></svg>
<div style="position:absolute;left:2397px;top:872.92px;height:28px;line-height:28px;font-size:21.3px;color:#e2e4e6;font-weight:400;font-style:normal;white-space:pre;-webkit-text-stroke:0.5px #e2e4e6;">User Rating</div>
<div style="position:absolute;left:2376px;top:937.55px;height:28px;line-height:28px;font-size:21.5px;color:#d5d8dc;font-weight:400;font-style:normal;white-space:pre;-webkit-text-stroke:0.5px #d5d8dc;">Color by</div>
<div style="position:absolute;left:2376px;top:978px;width:788px;height:48px;background:#212834;box-sizing:border-box;border:2px solid #6c6b68;border-radius:3px;"></div>
<svg style="position:absolute;left:3131px;top:996.5px" width="16" height="12" viewBox="0 0 16 12"><path d="M0,0 L16,0 L8,12 Z" fill="#d6d7d9"/></svg>
<div style="position:absolute;left:2397px;top:988.85px;height:28px;line-height:28px;font-size:21.5px;color:#e2e4e6;font-weight:400;font-style:normal;white-space:pre;-webkit-text-stroke:0.5px #e2e4e6;">Genre</div>
<div style="position:absolute;left:2376px;top:1029.59px;height:27px;line-height:27px;font-size:20.5px;color:#c9cdd2;font-weight:400;font-style:italic;white-space:pre;-webkit-text-stroke:0.5px #c9cdd2;">Optional</div>
<div style="position:absolute;left:2376px;top:1088.85px;height:28px;line-height:28px;font-size:21.5px;color:#d5d8dc;font-weight:400;font-style:normal;white-space:pre;-webkit-text-stroke:0.5px #d5d8dc;">Facet by</div>
<div style="position:absolute;left:2376px;top:1130px;width:788px;height:48px;background:#212834;box-sizing:border-box;border:2px solid #6c6b68;border-radius:3px;"></div>
<svg style="position:absolute;left:3131px;top:1148.5px" width="16" height="12" viewBox="0 0 16 12"><path d="M0,0 L16,0 L8,12 Z" fill="#d6d7d9"/></svg>
<div style="position:absolute;left:2397px;top:1140.85px;height:28px;line-height:28px;font-size:21.5px;color:#9ca2aa;font-weight:400;font-style:italic;white-space:pre;-webkit-text-stroke:0.5px #9ca2aa;">Select...</div>
<div style="position:absolute;left:2376px;top:1181.19px;height:27px;line-height:27px;font-size:20.5px;color:#c9cdd2;font-weight:400;font-style:italic;white-space:pre;-webkit-text-stroke:0.5px #c9cdd2;">Optional</div>
<div style="position:absolute;left:2340px;top:1642px;width:912px;height:2px;background:#6c6b68;"></div>
<div style="position:absolute;left:2383.5px;top:1685.34px;height:25px;line-height:25px;font-size:19.5px;color:#f4f4f4;font-weight:400;font-style:normal;white-space:pre;-webkit-text-stroke:0.9px #f4f4f4;">Clear</div>
<div style="position:absolute;left:3030px;top:1672px;width:104px;height:48px;background:transparent;box-sizing:border-box;border:2px solid #6c6b68;border-radius:3px;"></div>
<div style="position:absolute;left:3047.3px;top:1685.34px;height:25px;line-height:25px;font-size:19.5px;color:#f0f0f0;font-weight:400;font-style:normal;white-space:pre;-webkit-text-stroke:0.9px #f0f0f0;">Preview</div>
<div style="position:absolute;left:3148px;top:1672px;width:75px;height:48px;background:#e07b37;border-radius:3px;"></div>
<div style="position:absolute;left:3165px;top:1685.51px;height:25px;line-height:25px;font-size:19px;color:#1b1b1b;font-weight:400;font-style:normal;white-space:pre;-webkit-text-stroke:0.9px #1b1b1b;">Save</div>
<div style="position:absolute;left:30.5px;top:1801.90px;height:29px;line-height:29px;font-size:22.5px;color:#dadde0;font-weight:400;font-style:normal;white-space:pre;-webkit-text-stroke:0.5px #dadde0;">0</div>
<div style="position:absolute;left:64px;top:1804.6px;width:28px;height:26.4px;background:#e9e9e9;"></div>
<div style="position:absolute;left:68.5px;top:1808.78px;height:21px;line-height:21px;font-size:16.5px;color:#222;font-weight:400;font-style:normal;white-space:pre;-webkit-text-stroke:0.3px #222;">$_</div>
<div style="position:absolute;left:108.5px;top:1801.90px;height:29px;line-height:29px;font-size:22.5px;color:#dadde0;font-weight:400;font-style:normal;white-space:pre;-webkit-text-stroke:0.5px #dadde0;">1</div>
<svg style="position:absolute;left:139px;top:1803px" width="26" height="26" viewBox="0 0 26 26">
<rect x="5.5" y="5" width="15.5" height="16" rx="1.5" fill="none" stroke="#e6e6e6" stroke-width="2.4"/>
<rect x="9" y="8.8" width="8.5" height="8.5" fill="#e6e6e6"/>
<circle cx="13.2" cy="13" r="1.1" fill="#202733"/>
<g stroke="#e6e6e6" stroke-width="2.2"><path d="M10.5,0.8 L10.5,4 M15.5,0.8 L15.5,4 M10.5,22 L10.5,25.2 M15.5,22 L15.5,25.2 M0.8,10 L4.5,10 M0.8,16 L4.5,16 M22,10 L25.2,10 M22,16 L25.2,16"/></g>
</svg>
<div style="position:absolute;left:200px;top:1802.15px;height:28px;line-height:28px;font-size:21.5px;color:#dadde0;font-weight:400;font-style:normal;white-space:pre;-webkit-text-stroke:0.5px #dadde0;">Git: idle</div>
<div style="position:absolute;left:3201.7px;top:1800.15px;height:31px;line-height:31px;font-size:23.5px;color:#dadde0;font-weight:400;font-style:normal;white-space:pre;-webkit-text-stroke:0.5px #dadde0;">untitled.flow</div></div></body></html>
